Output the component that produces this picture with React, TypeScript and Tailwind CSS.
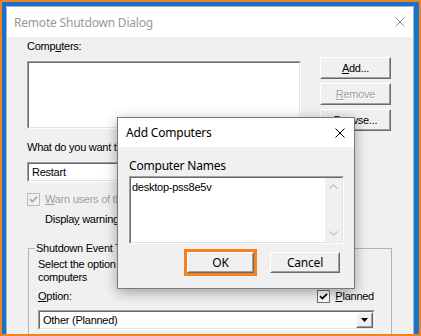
import React from "react";

const ui = "font-['Liberation_Sans',Arial,sans-serif] text-[11px] tracking-[-0.25px] leading-[13px]";
const seg = "font-['Noto_Sans',sans-serif] text-[12px] tracking-[-0.2px]";

function Raised({ className = "", children }: { className?: string; children?: React.ReactNode }) {
  return (
    <div className={`border border-t-white border-l-white border-r-[#696969] border-b-[#696969] bg-[#f0f0f0] ${className}`}>
      <div className="h-full border border-t-[#f0f0f0] border-l-[#f0f0f0] border-r-[#a0a0a0] border-b-[#a0a0a0] flex items-center justify-center">
        {children}
      </div>
    </div>
  );
}

function Sunken({ className = "", children }: { className?: string; children?: React.ReactNode }) {
  return (
    <div className={`border border-t-[#a0a0a0] border-l-[#a0a0a0] border-r-white border-b-white ${className}`}>
      <div className="h-full border border-t-[#696969] border-l-[#696969] border-r-[#e3e3e3] border-b-[#e3e3e3] bg-white flex">
        {children}
      </div>
    </div>
  );
}

function Combo({ text, className = "" }: { text: string; className?: string }) {
  return (
    <Sunken className={`h-[20px] ${className}`}>
      <div className="flex-1 flex items-center pl-[3px]">{text}</div>
      <Raised className="w-[17px] h-[16px]">
        <svg width="7" height="4" viewBox="0 0 7 4">
          <path d="M0 0 H7 L3.5 4 Z" fill="#000" />
        </svg>
      </Raised>
    </Sunken>
  );
}

function Check({ disabled }: { disabled?: boolean }) {
  return (
    <div
      className={
        disabled
          ? "w-[13px] h-[13px] border border-[#bcbcbc] bg-[#f0f0f0] flex items-center justify-center shrink-0"
          : "w-[13px] h-[13px] border border-[#707070] bg-white flex items-center justify-center shrink-0"
      }
    >
      <svg width="9" height="9" viewBox="0 0 9 9">
        <path d="M1 4.2 L3.4 6.6 L8 1.8" fill="none" stroke={disabled ? "#a8a8a8" : "#000"} strokeWidth="1.7" />
      </svg>
    </div>
  );
}

function CloseX({ color }: { color: string }) {
  return (
    <svg width="10" height="10" viewBox="0 0 10 10">
      <path d="M0.5 0.5 L9.5 9.5 M9.5 0.5 L0.5 9.5" stroke={color} strokeWidth="1" />
    </svg>
  );
}

export default function App() {
  return (
    <div className="relative w-[421px] h-[336px] overflow-hidden border-2 border-[#f5821f] bg-[#1374cf]">
      {/* main window */}
      <div className={`ml-[4px] mt-[4px] w-[408px] h-[340px] border border-[#a9b4c0] flex flex-col ${ui}`}>
        <div className="h-[30px] bg-white flex items-center justify-between pl-[7px] pr-[8px]">
          <span className={`${seg} text-[#999999]`}>Remote Shutdown Dialog</span>
          <CloseX color="#8a8a8a" />
        </div>
        <div className="flex-1 bg-[#f0f0f0] pl-[20px] pt-[3px] text-black">
          <div>
            Comp<span className="underline">u</span>ters:
          </div>
          <div className="flex items-start mt-[4px]">
            <Sunken className="w-[274px] h-[68px] mt-[4px]" />
            <div className="ml-[19px] flex flex-col gap-[4px]">
              <Raised className="w-[71px] h-[22px]">
                <span>
                  <span className="underline">A</span>dd...
                </span>
              </Raised>
              <Raised className="w-[71px] h-[22px]">
                <span className="text-[#a0a0a0] [text-shadow:1px_1px_0_#fff]">
                  <span className="underline">R</span>emove
                </span>
              </Raised>
              <Raised className="w-[71px] h-[22px]">
                <span>
                  <span className="underline">B</span>rowse...
                </span>
              </Raised>
            </div>
          </div>
          <div className="mt-[10px] whitespace-nowrap">What do you want these computers to do:</div>
          <Combo className="mt-[8px] w-[274px]" text="Restart" />
          <div className="mt-[11px] flex items-center gap-[5px] text-[#a0a0a0] whitespace-nowrap">
            <Check disabled />
            <span>
              <span className="underline">W</span>arn users of the action
            </span>
          </div>
          <div className="mt-[7px] ml-[18px] whitespace-nowrap">
            Displa<span className="underline">y</span> warning for
          </div>
          <fieldset className="mt-[16px] ml-[1px] w-[364px] border border-[#b4b4b4] pb-[10px]">
            <legend className="ml-[6px] px-[1px]">Shutdown Event Tracker</legend>
            <div className="pl-[9px] pr-[15px]">
              <div className="mt-[3px] whitespace-nowrap">
                Select the option that best describes why you want to shut down the
                <br />
                computers
              </div>
              <div className="mt-[6px] flex items-center justify-between">
                <span>
                  <span className="underline">O</span>ption:
                </span>
                <div className="flex items-center gap-[5px] mr-[2px]">
                  <Check />
                  <span>
                    <span className="underline">P</span>lanned
                  </span>
                </div>
              </div>
              <Combo className="mt-[7px] w-[337px]" text="Other (Planned)" />
            </div>
          </fieldset>
        </div>
      </div>

      {/* Add Computers dialog */}
      <div className="absolute left-[115px] top-[115px] w-[238px] h-[172px] border border-[#7a7a7a] bg-[#f0f0f0] shadow-[0_3px_12px_rgba(0,0,0,0.35)] flex flex-col">
        <div className="h-[29px] bg-white flex items-center justify-between pl-[8px] pr-[9px]">
          <span className={`${seg} text-black`}>Add Computers</span>
          <CloseX color="#000" />
        </div>
        <div className="pl-[11px] pt-[11px]">
          <div className={`${seg} leading-[15px] text-black`}>Computer Names</div>
          <Sunken className="mt-[3px] w-[215px] h-[68px]">
            <div className={`flex-1 pl-[1px] pt-[3px] ${ui}`}>desktop-pss8e5v</div>
            <div className="w-[17px] bg-[#f0f0f0] flex flex-col items-center justify-between py-[6px]">
              <svg width="9" height="5" viewBox="0 0 9 5">
                <path d="M0.5 4.5 L4.5 0.8 L8.5 4.5" fill="none" stroke="#c6c6c6" strokeWidth="1.4" />
              </svg>
              <svg width="9" height="5" viewBox="0 0 9 5">
                <path d="M0.5 0.5 L4.5 4.2 L8.5 0.5" fill="none" stroke="#c6c6c6" strokeWidth="1.4" />
              </svg>
            </div>
          </Sunken>
          <div className="mt-[8px] ml-[58px] flex gap-[16px]">
            <Raised className="w-[67px] h-[21px] outline-[3px] outline-solid outline-[#f5821f]">
              <span className={`${seg} leading-[15px]`}>OK</span>
            </Raised>
            <Raised className="w-[70px] h-[21px]">
              <span className={`${seg} leading-[15px]`}>Cancel</span>
            </Raised>
          </div>
        </div>
      </div>
    </div>
  );
}
